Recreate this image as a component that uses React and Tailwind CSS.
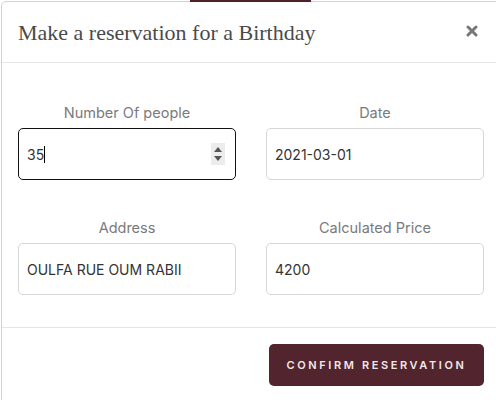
const sans = { fontFamily: 'Inter, "Noto Sans", sans-serif' };

function Field({ label, children, focused }) {
  return (
    <div className="flex flex-col">
      <div className="text-center text-[14.5px] leading-5 text-[#7a7a7a] mb-[5px]" style={sans}>
        {label}
      </div>
      <div
        className={
          'h-[52px] rounded-[5px] flex items-center px-2 text-[14px] text-[#333] ' +
          (focused ? 'border-[1.5px] border-[#111]' : 'border border-[#d6d6d6]')
        }
        style={sans}
      >
        {children}
      </div>
    </div>
  );
}

export default function App() {
  return (
    <div className="relative w-[496px] h-[400px] overflow-hidden bg-white">
      <div className="absolute left-[190px] top-0 w-[121px] h-[2px] bg-[#4e2129]" />
      <div className="ml-[1px] mt-[1px] w-[500px] border border-[#d2d2d2] rounded-tl-[5px]">
        <div className="h-[61px] flex items-center justify-between pl-4 pr-[21px] border-b border-[#e6e6e6]">
          <h1 className="text-[22px] text-[#4a4a4a] mt-[1px]" style={{ fontFamily: '"Liberation Serif", "DejaVu Serif", serif' }}>
            Make a reservation for a Birthday
          </h1>
          <svg width="12" height="12" viewBox="0 0 12 12" className="mr-[1px] -mt-[2px]">
            <path d="M2 2L10 10M10 2L2 10" stroke="#777" strokeWidth="3" strokeLinecap="round" />
          </svg>
        </div>
        <div className="px-4 pt-[40px] pb-[32px] border-b border-[#e6e6e6] grid grid-cols-[218px_218px] gap-x-[30px] gap-y-[38px]">
          <Field label="Number Of people" focused>
            <span>35</span>
            <span className="w-px h-[17px] bg-black" />
            <div className="ml-auto mr-[2px] w-[14px] h-[22px] bg-[#ececec] flex flex-col items-center justify-center gap-[4px]">
              <svg width="8" height="5" viewBox="0 0 8 5"><path d="M0 5L4 0L8 5Z" fill="#555" /></svg>
              <svg width="8" height="5" viewBox="0 0 8 5"><path d="M0 0L4 5L8 0Z" fill="#555" /></svg>
            </div>
          </Field>
          <Field label="Date">2021-03-01</Field>
          <Field label="Address">OULFA RUE OUM RABII</Field>
          <Field label="Calculated Price">4200</Field>
        </div>
        <div className="flex justify-end pt-4 pb-[14px] pr-4">
          <button
            className="w-[215px] h-[42px] rounded-[5px] bg-[#52242d] text-[#f1e8ea] text-[11px] font-semibold tracking-[2.6px]"
            style={sans}
          >
            CONFIRM RESERVATION
          </button>
        </div>
      </div>
    </div>
  );
}
